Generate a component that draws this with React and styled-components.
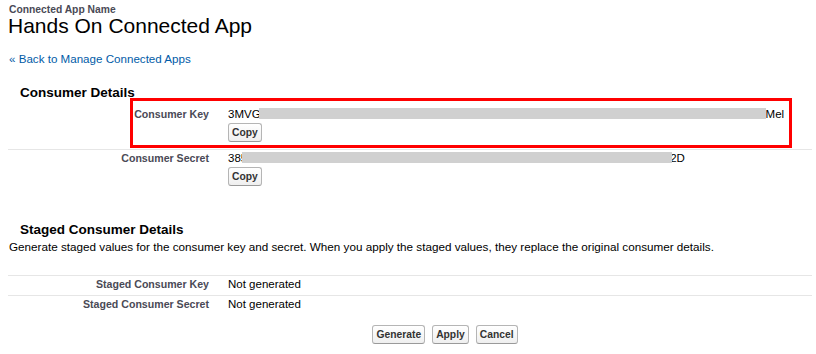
import React from 'react';
import styled, { createGlobalStyle } from 'styled-components';

const GlobalStyle = createGlobalStyle`
  body {
    margin: 0;
    background: #fff;
  }
`;

const Page = styled.div`
  font-family: "Liberation Sans", Arial, sans-serif;
  color: #000;
  padding: 4px 4px 0 8px;
`;

const Kicker = styled.div`
  font-size: 10.3px;
  font-weight: bold;
  line-height: 11px;
  color: #4a4a56;
  padding-left: 1px;
`;

const Title = styled.h1`
  margin: 0;
  font-size: 21px;
  font-weight: normal;
  line-height: 21px;
`;

const BackLink = styled.a`
  display: block;
  margin-top: 16px;
  padding-left: 1px;
  font-size: 11.6px;
  line-height: 14px;
  color: #015ba7;
  text-decoration: none;
`;

const SectionTitle = styled.h2`
  margin: ${p => p.$top}px 0 0;
  padding-left: 12px;
  font-size: 13.5px;
  font-weight: bold;
  line-height: 16px;
`;

const Description = styled.p`
  margin: 1px 0 0 1px;
  font-size: 11.7px;
  line-height: 15px;
`;

const DetailTable = styled.div`
  margin-top: ${p => p.$top}px;
`;

const DetailRow = styled.div`
  position: relative;
  display: grid;
  grid-template-columns: 201px 1fr;
  column-gap: 19px;
  padding: 1px 0 ${p => p.$bottom || 4}px;
  border-top: 1px solid ${p => (p.$divider ? '#e6e6e6' : 'transparent')};
`;

const Label = styled.div`
  text-align: right;
  font-size: 10.6px;
  font-weight: bold;
  line-height: 14px;
  color: #4a4a56;
`;

const Value = styled.div`
  font-size: 11.5px;
  line-height: 14px;
  white-space: nowrap;
`;

const Redact = styled.span`
  position: relative;
  z-index: 1;
  display: inline-block;
  vertical-align: top;
  margin: 1px ${p => p.$right || 0}px 0 ${p => p.$left || 0}px;
  width: ${p => p.$w}px;
  height: 11px;
  background: #d0d0d0;
`;

const Highlight = styled.div`
  position: absolute;
  top: -8px;
  left: 122px;
  right: 20px;
  bottom: 1px;
  border: 3px solid #ff0000;
  pointer-events: none;
`;

const Button = styled.button`
  display: inline-block;
  height: 19px;
  margin: 0;
  padding: 0 3px;
  font-family: "Liberation Sans", Arial, sans-serif;
  font-size: 10.3px;
  font-weight: bold;
  line-height: 17px;
  color: #333;
  background: linear-gradient(#ffffff, #efefef);
  border: 1px solid #b5b5b5;
  border-bottom-color: #9a9a9a;
  border-radius: 3px;
  cursor: pointer;
`;

const CopyButton = styled(Button)`
  margin-top: 2px;
`;

const ButtonBar = styled.div`
  display: flex;
  justify-content: center;
  gap: 7px;
  margin-top: 10px;
  padding-left: 70px;
`;

const App = () => {
  return (
    <Page>
      <GlobalStyle />
      <Kicker>Connected App Name</Kicker>
      <Title>Hands On Connected App</Title>
      <BackLink href="#">« Back to Manage Connected Apps</BackLink>

      <SectionTitle $top={19}>Consumer Details</SectionTitle>
      <DetailTable $top={4}>
        <DetailRow $bottom={7}>
          <Label>Consumer Key</Label>
          <Value>
            3MVG<Redact $w={507} $left={-2} />Mel
            <div>
              <CopyButton>Copy</CopyButton>
            </div>
          </Value>
          <Highlight />
        </DetailRow>
        <DetailRow $divider $bottom={7}>
          <Label>Consumer Secret</Label>
          <Value>
            385<Redact $w={430} $left={-5} $right={-2} />2D
            <div>
              <CopyButton>Copy</CopyButton>
            </div>
          </Value>
        </DetailRow>
      </DetailTable>

      <SectionTitle $top={29}>Staged Consumer Details</SectionTitle>
      <Description>
        Generate staged values for the consumer key and secret. When you apply the staged values, they replace the original consumer details.
      </Description>
      <DetailTable $top={21}>
        <DetailRow $divider>
          <Label>Staged Consumer Key</Label>
          <Value>Not generated</Value>
        </DetailRow>
        <DetailRow $divider>
          <Label>Staged Consumer Secret</Label>
          <Value>Not generated</Value>
        </DetailRow>
      </DetailTable>

      <ButtonBar>
        <Button>Generate</Button>
        <Button>Apply</Button>
        <Button>Cancel</Button>
      </ButtonBar>
    </Page>
  );
};

export default App;
